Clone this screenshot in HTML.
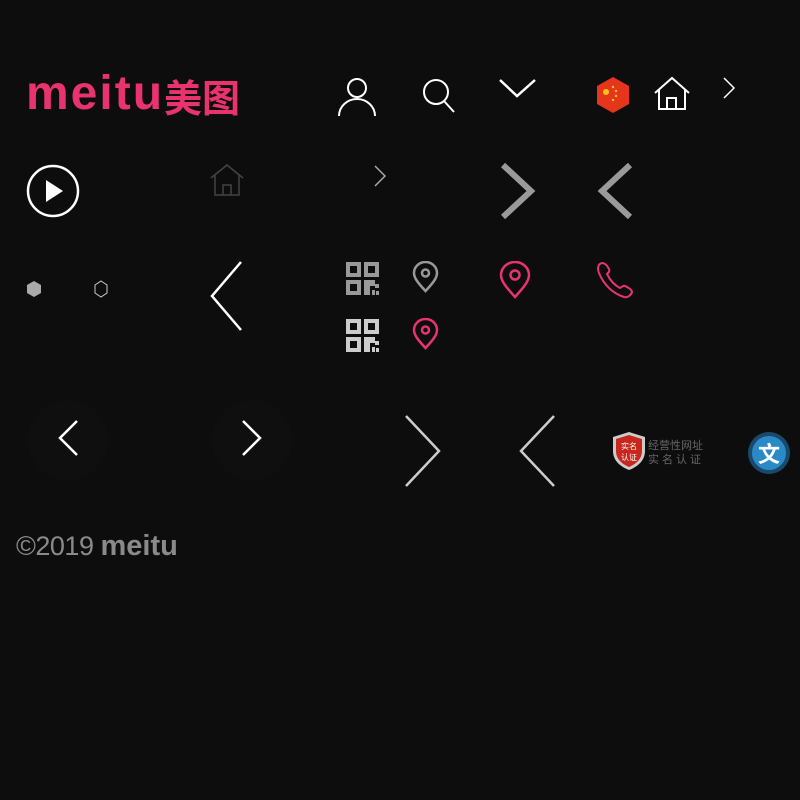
<!DOCTYPE html>
<html><head><meta charset="utf-8"><style>
html,body{margin:0;padding:0;background:#0d0d0d;width:800px;height:800px;overflow:hidden;position:relative;font-family:"Liberation Sans","Noto Sans CJK SC",sans-serif}
svg,div{position:absolute}
</style></head><body>
<div style="left:26px;top:68px;color:#e8336f;font-size:48px;font-weight:bold;letter-spacing:2px;line-height:52px">meitu</div>
<div style="left:164px;top:74px;color:#e8336f;font-size:38px;line-height:44px;font-family:'Noto Sans CJK SC',sans-serif;font-weight:bold">美图</div>

<svg style="left:336px;top:76px" width="42" height="42" viewBox="0 0 42 42" fill="none" stroke="#fff" stroke-width="2"><circle cx="21" cy="12" r="9"/><path d="M3 40 A18 17 0 0 1 39 40"/></svg>
<svg style="left:421px;top:77px" width="36" height="36" fill="none" stroke="#fff" stroke-width="2"><circle cx="15" cy="15" r="12"/><path d="M23 24 L33 35"/></svg>
<svg style="left:498px;top:76px" width="40" height="24" fill="none" stroke="#fff" stroke-width="2.5"><path d="M2 4 L19 20 L37 4"/></svg>
<svg style="left:596px;top:76px" width="34" height="38"><polygon points="17,1 33,10 33,28 17,37 1,28 1,10" fill="#e5361c"/><circle cx="10" cy="16" r="3" fill="#f7c514"/><circle cx="17" cy="11" r="1.2" fill="#f7c514"/><circle cx="20" cy="15" r="1.2" fill="#f7c514"/><circle cx="20" cy="20" r="1.2" fill="#f7c514"/><circle cx="17" cy="24" r="1.2" fill="#f7c514"/></svg>
<svg style="left:654px;top:76px" width="36" height="36" fill="none" stroke="#fff" stroke-width="2"><path d="M1 17 L18 2 L35 17 M5 14 V33 H31 V14 M13 33 V22 H22 V33"/></svg>
<svg style="left:721px;top:76px" width="16" height="24" fill="none" stroke="#fff" stroke-width="1.5"><path d="M3 2 L13 12 L3 22"/></svg>

<svg style="left:25px;top:163px" width="56" height="56"><circle cx="28" cy="28" r="25" fill="none" stroke="#fff" stroke-width="2.5"/><path d="M21 17 L38 28 L21 39 Z" fill="#fff"/></svg>
<svg style="left:210px;top:163px" width="34" height="34" fill="none" stroke="#444" stroke-width="1.5"><path d="M1 15 L17 2 L33 15 M5 12 V32 H29 V12 M13 32 V22 H21 V32"/></svg>
<svg style="left:372px;top:163px" width="18" height="26" fill="none" stroke="#aaa" stroke-width="1.5"><path d="M3 3 L13 13 L3 23"/></svg>
<svg style="left:499px;top:163px" width="40" height="56" fill="none" stroke="#9a9a9a" stroke-width="6"><path d="M4 2 L32 28 L4 54"/></svg>
<svg style="left:594px;top:163px" width="40" height="56" fill="none" stroke="#9a9a9a" stroke-width="6"><path d="M36 2 L8 28 L36 54"/></svg>

<svg style="left:27px;top:280px" width="16" height="18"><polygon points="7,1 14,5 14,13 7,17 0,13 0,5" fill="#aaa"/></svg>
<svg style="left:93px;top:280px" width="16" height="18"><polygon points="8,1 14,5 14,13 8,17 2,13 2,5" fill="none" stroke="#ccc" stroke-width="1"/></svg>
<svg style="left:208px;top:260px" width="36" height="72" fill="none" stroke="#fff" stroke-width="2.5"><path d="M33 2 L4 36 L33 70"/></svg>

<svg style="left:346px;top:262px" width="34" height="33"><g fill="#999"><path d="M0 0h15v15H0zM18 0h15v15H18zM0 18h15v15H0z"/></g><g fill="#0d0d0d"><rect x="4" y="4" width="7" height="7"/><rect x="22" y="4" width="7" height="7"/><rect x="4" y="22" width="7" height="7"/></g><g fill="#999"><rect x="18" y="18" width="6" height="15"/><rect x="24" y="18" width="5" height="6"/><rect x="29" y="22" width="4" height="4"/><rect x="26" y="28" width="3" height="5"/><rect x="30" y="29" width="3" height="4"/></g></svg>
<svg style="left:346px;top:319px" width="34" height="33"><g fill="#ccc"><path d="M0 0h15v15H0zM18 0h15v15H18zM0 18h15v15H0z"/></g><g fill="#0d0d0d"><rect x="4" y="4" width="7" height="7"/><rect x="22" y="4" width="7" height="7"/><rect x="4" y="22" width="7" height="7"/></g><g fill="#ccc"><rect x="18" y="18" width="6" height="15"/><rect x="24" y="18" width="5" height="6"/><rect x="29" y="22" width="4" height="4"/><rect x="26" y="28" width="3" height="5"/><rect x="30" y="29" width="3" height="4"/></g></svg>
<svg style="left:412px;top:261px" width="27" height="32" fill="none" stroke="#999" stroke-width="2.5"><path d="M13.5 30 C6 22 2 17 2 12 A11.5 11 0 0 1 25 12 C25 17 21 22 13.5 30Z"/><circle cx="13.5" cy="12" r="3.5"/></svg>
<svg style="left:412px;top:318px" width="27" height="32" fill="none" stroke="#e8336f" stroke-width="2.5"><path d="M13.5 30 C6 22 2 17 2 12 A11.5 11 0 0 1 25 12 C25 17 21 22 13.5 30Z"/><circle cx="13.5" cy="12" r="3.5"/></svg>
<svg style="left:499px;top:261px" width="32" height="38" fill="none" stroke="#e8336f" stroke-width="2.5"><path d="M16 36 C7 26 2 20 2 14 A14 13 0 0 1 30 14 C30 20 25 26 16 36Z"/><circle cx="16" cy="14" r="4.5"/></svg>
<svg style="left:596px;top:261px" width="38" height="38" fill="none" stroke="#e8336f" stroke-width="2"><path d="M6 2 C2 3 1 7 3 12 C8 24 16 32 28 36 C32 37 35 34 36 31 C36 29 32 26 29 25 C27 24 26 26 24 27 C18 24 14 19 11 13 C13 11 14 10 13 8 C11 4 9 2 6 2Z"/></svg>

<svg style="left:26px;top:398px" width="84" height="84"><circle cx="42" cy="42" r="40" fill="#0f0f0f"/><path d="M51 23 L34 40 L51 57" fill="none" stroke="#fff" stroke-width="2.5"/></svg>
<svg style="left:210px;top:398px" width="84" height="84"><circle cx="42" cy="42" r="40" fill="#0f0f0f"/><path d="M33 23 L50 40 L33 57" fill="none" stroke="#fff" stroke-width="2.5"/></svg>
<svg style="left:402px;top:414px" width="42" height="74" fill="none" stroke="#ccc" stroke-width="2.5"><path d="M4 2 L37 37 L4 72"/></svg>
<svg style="left:516px;top:414px" width="42" height="74" fill="none" stroke="#ccc" stroke-width="2.5"><path d="M38 2 L5 37 L38 72"/></svg>

<svg style="left:611px;top:431px" width="36" height="40"><path d="M18 1 L34 6 L34 20 C34 30 26 36 18 39 C10 36 2 30 2 20 L2 6 Z" fill="#ccc"/><path d="M18 4 L31 8 L31 20 C31 28 25 33 18 36 C11 33 5 28 5 20 L5 8 Z" fill="#c8271e"/><text x="18" y="18" font-size="8" fill="#fff" text-anchor="middle" font-family="Noto Sans CJK SC">实名</text><text x="18" y="29" font-size="8" fill="#fff" text-anchor="middle" font-family="Noto Sans CJK SC">认证</text></svg>
<div style="left:648px;top:439px;color:#666;font-size:11px;line-height:14px;letter-spacing:0px">经营性网址<br><span style="letter-spacing:3px">实名认证</span></div>
<svg style="left:747px;top:431px" width="44" height="44"><circle cx="22" cy="22" r="21" fill="#1a4a6a"/><circle cx="22" cy="22" r="17" fill="#2a8ac8"/><text x="22" y="31" font-size="22" fill="#fff" text-anchor="middle" font-family="Noto Sans CJK SC" font-weight="bold">文</text></svg>

<div style="left:16px;top:530px;color:#8a8a8a;font-size:27px;line-height:32px;letter-spacing:-0.5px">©2019 <b style="font-size:29px;letter-spacing:0px">meitu</b></div>
</body></html>
